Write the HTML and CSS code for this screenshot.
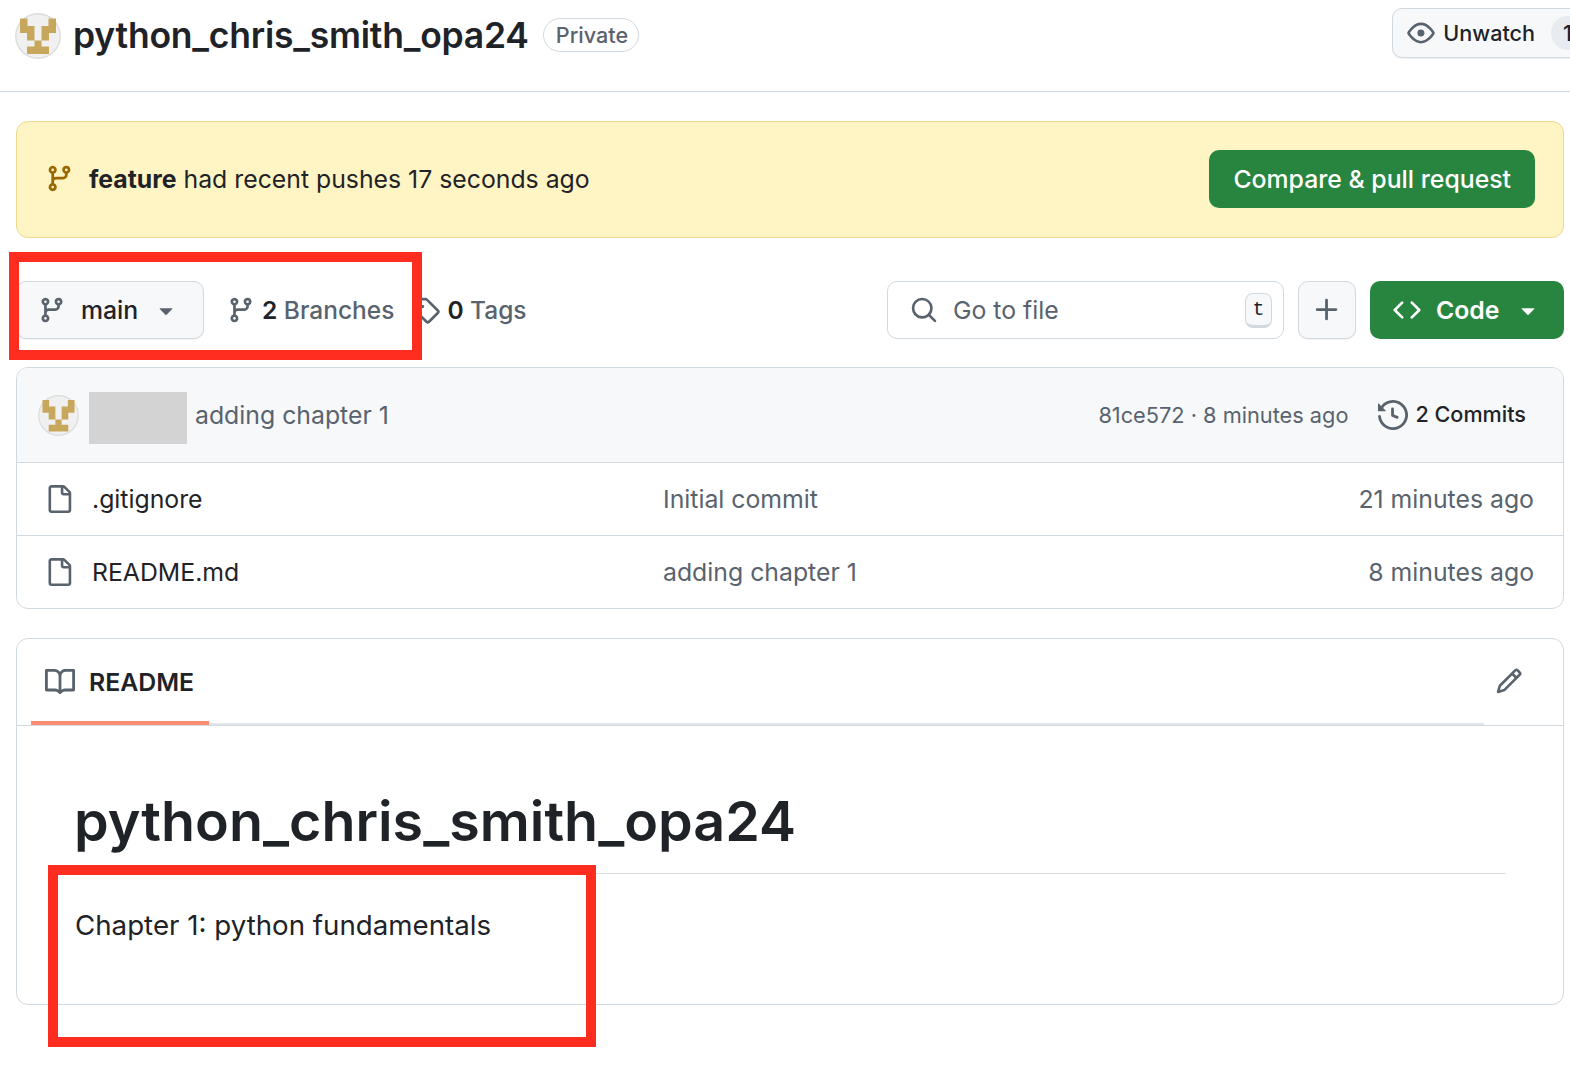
FILE: index.html
```html
<!DOCTYPE html>
<html lang="en">
<head>
    <meta charset="UTF-8">
    <meta name="viewport" content="width=device-width, initial-scale=1.0">
    <title>python_chris_smith_opa24</title>
    <link rel="stylesheet" href="styles.css">
</head>

<body>
    <svg class="icon-defs" aria-hidden="true">
        <symbol id="i-branch" viewBox="0 0 16 16"><path d="M9.5 3.25a2.25 2.25 0 1 1 3 2.122V6A2.5 2.5 0 0 1 10 8.5H6a1 1 0 0 0-1 1v1.128a2.251 2.251 0 1 1-1.5 0V5.372a2.25 2.25 0 1 1 1.5 0v1.836A2.493 2.493 0 0 1 6 7h4a1 1 0 0 0 1-1v-.628A2.25 2.25 0 0 1 9.5 3.25Zm-6 0a.75.75 0 1 0 1.5 0 .75.75 0 0 0-1.5 0Zm8.25-.75a.75.75 0 1 0 0 1.5.75.75 0 0 0 0-1.5ZM4.25 12a.75.75 0 1 0 0 1.5.75.75 0 0 0 0-1.5Z"/></symbol>
        <symbol id="i-eye" viewBox="0 0 16 16"><path d="M8 2c1.981 0 3.671.992 4.933 2.078 1.27 1.091 2.187 2.345 2.637 3.023a1.62 1.62 0 0 1 0 1.798c-.45.678-1.367 1.932-2.637 3.023C11.67 13.008 9.981 14 8 14c-1.981 0-3.671-.992-4.933-2.078C1.797 10.83.88 9.576.43 8.898a1.62 1.62 0 0 1 0-1.798c.45-.677 1.367-1.931 2.637-3.022C4.33 2.992 6.019 2 8 2ZM1.679 7.932a.12.12 0 0 0 0 .136c.411.622 1.241 1.75 2.366 2.717C5.176 11.758 6.527 12.5 8 12.5c1.473 0 2.825-.742 3.955-1.715 1.124-.967 1.954-2.096 2.366-2.717a.12.12 0 0 0 0-.136c-.412-.621-1.242-1.75-2.366-2.717C10.824 4.242 9.473 3.5 8 3.5c-1.473 0-2.825.742-3.955 1.715-1.124.967-1.954 2.096-2.366 2.717ZM8 10a2 2 0 1 1-.001-3.999A2 2 0 0 1 8 10Z"/></symbol>
        <symbol id="i-tag" viewBox="0 0 16 16"><path d="M1 7.775V2.75C1 1.784 1.784 1 2.75 1h5.025c.464 0 .91.184 1.238.513l6.25 6.25a1.75 1.75 0 0 1 0 2.474l-5.026 5.026a1.75 1.75 0 0 1-2.474 0l-6.25-6.25A1.752 1.752 0 0 1 1 7.775Zm1.5 0c0 .066.026.13.073.177l6.25 6.25a.25.25 0 0 0 .354 0l5.025-5.025a.25.25 0 0 0 0-.354l-6.25-6.25a.25.25 0 0 0-.177-.073H2.75a.25.25 0 0 0-.25.25ZM6 5a1 1 0 1 1 0 2 1 1 0 0 1 0-2Z"/></symbol>
        <symbol id="i-search" viewBox="0 0 16 16"><path d="M10.68 11.74a6 6 0 0 1-7.922-8.982 6 6 0 0 1 8.982 7.922l3.04 3.04a.749.749 0 0 1-.326 1.275.749.749 0 0 1-.734-.215ZM11.5 7a4.499 4.499 0 1 0-8.997 0A4.499 4.499 0 0 0 11.5 7Z"/></symbol>
        <symbol id="i-plus" viewBox="0 0 16 16"><path d="M7.75 2a.75.75 0 0 1 .75.75V7h4.25a.75.75 0 0 1 0 1.5H8.5v4.25a.75.75 0 0 1-1.5 0V8.5H2.75a.75.75 0 0 1 0-1.5H7V2.75A.75.75 0 0 1 7.75 2Z"/></symbol>
        <symbol id="i-code" viewBox="0 0 16 16"><path d="m11.28 3.22 4.25 4.25a.75.75 0 0 1 0 1.06l-4.25 4.25a.749.749 0 0 1-1.275-.326.749.749 0 0 1 .215-.734L13.94 8l-3.72-3.72a.749.749 0 0 1 .326-1.275.749.749 0 0 1 .734.215Zm-6.56 0a.751.751 0 0 1 1.042.018.751.751 0 0 1 .018 1.042L2.06 8l3.72 3.72a.749.749 0 0 1-.326 1.275.749.749 0 0 1-.734-.215L.47 8.53a.75.75 0 0 1 0-1.06Z"/></symbol>
        <symbol id="i-caret" viewBox="0 0 16 16"><path d="m4.427 7.427 3.396 3.396a.25.25 0 0 0 .354 0l3.396-3.396A.25.25 0 0 0 11.396 7H4.604a.25.25 0 0 0-.177.427Z"/></symbol>
        <symbol id="i-history" viewBox="0 0 16 16"><path d="m.427 1.927 1.215 1.215a8.002 8.002 0 1 1-1.6 5.685.75.75 0 1 1 1.493-.154 6.5 6.5 0 1 0 1.18-4.458l1.358 1.358A.25.25 0 0 1 3.896 6H.25A.25.25 0 0 1 0 5.75V2.104a.25.25 0 0 1 .427-.177ZM7.75 4a.75.75 0 0 1 .75.75v2.992l2.028.812a.75.75 0 0 1-.557 1.392l-2.5-1A.751.751 0 0 1 7 8.25v-3.5A.75.75 0 0 1 7.75 4Z"/></symbol>
        <symbol id="i-file" viewBox="0 0 16 16"><path d="M2 1.75C2 .784 2.784 0 3.75 0h6.586c.464 0 .909.184 1.237.513l2.914 2.914c.329.328.513.773.513 1.237v9.586A1.75 1.75 0 0 1 13.25 16h-9.5A1.75 1.75 0 0 1 2 14.25Zm1.75-.25a.25.25 0 0 0-.25.25v12.5c0 .138.112.25.25.25h9.5a.25.25 0 0 0 .25-.25V6h-2.75A1.75 1.75 0 0 1 9 4.25V1.5Zm6.75.062V4.25c0 .138.112.25.25.25h2.688l-.011-.013-2.914-2.914-.013-.011Z"/></symbol>
        <symbol id="i-book" viewBox="0 0 16 16"><path d="M0 1.75A.75.75 0 0 1 .75 1h4.253c1.227 0 2.317.59 3 1.501A3.743 3.743 0 0 1 11.006 1h4.245a.75.75 0 0 1 .75.75v10.5a.75.75 0 0 1-.75.75h-4.507a2.25 2.25 0 0 0-1.591.659l-.622.621a.75.75 0 0 1-1.06 0l-.622-.621A2.25 2.25 0 0 0 5.258 13H.75a.75.75 0 0 1-.75-.75Zm7.251 10.324.004-5.073-.002-2.253A2.25 2.25 0 0 0 5.003 2.5H1.5v9h3.757a3.75 3.75 0 0 1 1.994.574ZM8.755 4.75l-.004 7.322a3.752 3.752 0 0 1 1.992-.572H14.5v-9h-3.495a2.25 2.25 0 0 0-2.25 2.25Z"/></symbol>
        <symbol id="i-pencil" viewBox="0 0 16 16"><path d="M11.013 1.427a1.75 1.75 0 0 1 2.474 0l1.086 1.086a1.75 1.75 0 0 1 0 2.474l-8.61 8.61c-.21.21-.47.364-.756.445l-3.251.93a.75.75 0 0 1-.927-.928l.929-3.25c.081-.286.235-.547.445-.758l8.61-8.61Zm.176 4.823L9.75 4.81l-6.286 6.287a.253.253 0 0 0-.064.108l-.558 1.953 1.953-.558a.253.253 0 0 0 .108-.064Zm1.238-3.763a.25.25 0 0 0-.354 0L10.811 3.75l1.439 1.44 1.263-1.263a.25.25 0 0 0 0-.354Z"/></symbol>
        <symbol id="i-avatar" viewBox="0 0 46 46">
            <circle cx="23" cy="23" r="22.2" fill="#f0f0f0" stroke="#dcdcdc" stroke-width="1.4"/>
            <path fill="#c7a75c" d="M5 5.5h7.500V13h7v14.500h7V13h7V5.500H41V20h-7v7.500h-7.500v6H34V41H12v-7.500h7.500v-6H12V20H5Z"/>
        </symbol>
    </svg>

    <header class="repo-head">
        <svg class="avatar-lg"><use href="#i-avatar"/></svg>
        <span class="repo-name">python_chris_smith_opa24</span>
        <span class="label-private">Private</span>
        <div class="btn btn-watch">
            <svg class="ico ico-eye"><use href="#i-eye"/></svg>
            <span>Unwatch</span>
            <span class="counter">1</span>
        </div>
    </header>

    <main class="content">
        <div class="push-banner">
            <svg class="ico ico-push"><use href="#i-branch"/></svg>
            <p class="push-text"><strong>feature</strong> had recent pushes 17 seconds ago</p>
            <div class="btn-green btn-compare">Compare &amp; pull request</div>
        </div>

        <div class="toolbar">
            <div class="btn btn-branch">
                <svg class="ico"><use href="#i-branch"/></svg>
                <span class="branch-name">main</span>
                <svg class="ico ico-caret"><use href="#i-caret"/></svg>
            </div>
            <div class="ref-link ref-branches">
                <svg class="ico"><use href="#i-branch"/></svg>
                <span><b>2</b> Branches</span>
            </div>
            <div class="ref-link ref-tags">
                <svg class="ico"><use href="#i-tag"/></svg>
                <span><b>0</b> Tags</span>
            </div>
            <div class="file-search">
                <svg class="ico"><use href="#i-search"/></svg>
                <span class="search-text">Go to file</span>
                <kbd class="key">t</kbd>
            </div>
            <div class="btn btn-plus"><svg class="ico ico-plus"><use href="#i-plus"/></svg></div>
            <div class="btn-green btn-code">
                <svg class="ico"><use href="#i-code"/></svg>
                <span>Code</span>
                <svg class="ico ico-caret"><use href="#i-caret"/></svg>
            </div>
        </div>

        <section class="files">
            <div class="commit-bar">
                <svg class="avatar-sm"><use href="#i-avatar"/></svg>
                <div class="redacted"></div>
                <span class="commit-msg">adding chapter 1</span>
                <span class="commit-meta">81ce572 · 8 minutes ago</span>
                <svg class="ico ico-history"><use href="#i-history"/></svg>
                <span class="commit-count">2 Commits</span>
            </div>
            <div class="file-row">
                <svg class="ico ico-file"><use href="#i-file"/></svg>
                <span class="file-name">.gitignore</span>
                <span class="file-msg">Initial commit</span>
                <span class="file-time">21 minutes ago</span>
            </div>
            <div class="file-row">
                <svg class="ico ico-file"><use href="#i-file"/></svg>
                <span class="file-name">README.md</span>
                <span class="file-msg">adding chapter 1</span>
                <span class="file-time">8 minutes ago</span>
            </div>
        </section>

        <section class="readme">
            <div class="readme-tabs">
                <div class="readme-rail">
                    <div class="readme-tab">
                        <svg class="ico ico-book"><use href="#i-book"/></svg>
                        <span>README</span>
                    </div>
                </div>
                <svg class="ico ico-pencil"><use href="#i-pencil"/></svg>
            </div>
            <div class="readme-body">
                <h1>python_chris_smith_opa24</h1>
                <p>Chapter 1: python fundamentals</p>
            </div>
        </section>
    </main>

    <div class="red-box red-box-refs"></div>
    <div class="red-box red-box-chapter"></div>
</body>
</html>
```

FILE: styles.css
```css
* {
    box-sizing: border-box;
}

body {
    position: relative;
    margin: 0;
    height: 1076px;
    overflow: hidden;
    background: #fff;
    color: #1f2328;
    font-family: Inter, "Liberation Sans", sans-serif;
    font-size: 24.8px;
}

.icon-defs {
    display: none;
}

.ico {
    width: 28px;
    height: 28px;
    flex: none;
    fill: #59636e;
}

/* repo header */
.repo-head {
    display: flex;
    align-items: center;
    height: 92px;
    padding: 0 0 20px 15px;
    border-bottom: 1px solid #d1d9e0;
    overflow: hidden;
}

.avatar-lg {
    width: 46px;
    height: 46px;
    flex: none;
}

.repo-name {
    margin-left: 12px;
    font-size: 35.5px;
    font-weight: 600;
    letter-spacing: -0.22px;
}

.label-private {
    margin-left: 14px;
    margin-bottom: 2px;
    padding: 0 10px 0 12px;
    height: 34px;
    line-height: 32px;
    border: 1px solid #d1d9e0;
    border-radius: 17px;
    color: #59636e;
    font-size: 21.6px;
    font-weight: 500;
}

.btn {
    display: flex;
    align-items: center;
    background: #f6f8fa;
    border: 1px solid #d1d9e0;
    border-radius: 10px;
    box-shadow: 0 1px 1px rgba(31, 35, 40, 0.06);
}

.btn-watch {
    flex: none;
    margin-left: auto;
    margin-right: -33px;
    margin-bottom: 5px;
    height: 50px;
    padding: 0 14px;
    font-weight: 500;
    font-size: 21.6px;
}

.ico-eye {
    margin-right: 8px;
}

.counter {
    margin-left: 16px;
    padding: 0 16px 0 12px;
    height: 34px;
    line-height: 34px;
    border-radius: 17px;
    background: #e8ebef;
}

/* push banner */
.content {
    padding: 29px 6px 0 16px;
}

.push-banner {
    display: flex;
    align-items: center;
    height: 117px;
    padding: 0 28px 2px 28px;
    background: #fff5c4;
    border: 1px solid #ecd98f;
    border-radius: 12px;
}

.ico-push {
    width: 29px;
    height: 29px;
    fill: #9a6700;
}

.push-text {
    margin: 0 0 0 15px;
}

.btn-green {
    display: flex;
    align-items: center;
    background: #288540;
    color: #fff;
    font-weight: 500;
    border-radius: 10px;
}

.btn-compare {
    margin-left: auto;
    height: 58px;
    padding: 0 24px;
}

/* toolbar */
.toolbar {
    display: flex;
    align-items: center;
    height: 58px;
    margin-top: 43px;
}

.btn-branch {
    height: 58px;
    width: 188px;
    padding-left: 21px;
}

.branch-name {
    margin-left: 15px;
    font-weight: 500;
}

.btn-branch .ico-caret {
    margin-left: 14px;
}

.ref-link {
    display: flex;
    align-items: center;
    gap: 7px;
    color: #59636e;
    font-size: 24.5px;
    font-weight: 500;
}

.ref-link b {
    color: #1f2328;
    font-weight: 600;
}

.ref-branches {
    margin-left: 23px;
}

.ref-tags {
    margin-left: 18px;
}

.file-search {
    display: flex;
    align-items: center;
    width: 397px;
    height: 58px;
    margin-left: auto;
    padding: 0 11px 0 22px;
    border: 1px solid #d1d9e0;
    border-radius: 10px;
}

.search-text {
    margin-left: 15px;
    color: #59636e;
}

.key {
    margin-left: auto;
    width: 27px;
    height: 35px;
    line-height: 31px;
    text-align: center;
    background: #f6f8fa;
    border: 1px solid #d1d9e0;
    border-bottom-width: 3px;
    border-radius: 8px;
    font-family: "Liberation Mono", monospace;
    font-size: 20px;
}

.btn-plus {
    justify-content: center;
    width: 58px;
    height: 58px;
    margin-left: 14px;
}

.ico-plus {
    width: 30px;
    height: 30px;
}

.btn-code {
    width: 194px;
    height: 58px;
    margin-left: 14px;
    padding-left: 23px;
    font-weight: 600;
}

.btn-code .ico {
    fill: #fff;
}

.btn-code span {
    margin-left: 15px;
}

.btn-code .ico-caret {
    margin-left: 14px;
}

/* file list */
.files {
    margin-top: 28px;
    border: 1px solid #d1d9e0;
    border-radius: 12px;
    overflow: hidden;
}

.commit-bar {
    display: flex;
    align-items: center;
    height: 94px;
    padding: 0 37px 0 21px;
    background: #f6f8fa;
}

.avatar-sm {
    width: 41px;
    height: 41px;
    flex: none;
}

.redacted {
    width: 98px;
    height: 52px;
    margin-top: 6px;
    margin-left: 10px;
    background: #d3d3d3;
}

.commit-msg {
    margin-left: 8px;
    color: #59636e;
}

.commit-meta {
    margin-left: auto;
    color: #59636e;
    font-size: 21.75px;
}

.ico-history {
    margin-left: 30px;
    width: 30px;
    height: 30px;
}

.commit-count {
    margin-left: 7px;
    margin-bottom: 2px;
    font-size: 21.6px;
    font-weight: 500;
}

.file-row {
    display: flex;
    align-items: center;
    height: 73px;
    padding: 0 29px 0 28px;
    border-top: 1px solid #d1d9e0;
}

.file-name {
    width: 571px;
    margin-left: 19px;
}

.file-msg {
    color: #59636e;
}

.file-time {
    margin-left: auto;
    color: #59636e;
}

/* readme */
.readme {
    height: 367px;
    margin-top: 29px;
    border: 1px solid #d1d9e0;
    border-radius: 12px;
    overflow: hidden;
}

.readme-tabs {
    display: flex;
    align-items: center;
    justify-content: space-between;
    height: 87px;
    padding-right: 40px;
    padding-left: 14px;
    border-bottom: 1px solid #d1d9e0;
}

.readme-rail {
    width: 1453px;
    height: 86px;
    border-bottom: 2px solid #e2e6e9;
}

.readme-tab {
    display: flex;
    align-items: center;
    gap: 14px;
    width: 178px;
    height: 86px;
    padding-top: 4px;
    padding-left: 14px;
    border-bottom: 4px solid #fd8c73;
    font-weight: 600;
}

.ico-book {
    width: 30px;
    height: 30px;
}

.ico-pencil {
    width: 28px;
    height: 28px;
    margin-bottom: 2px;
}

.readme-body {
    padding: 0 57px 0 58px;
}

.readme-body h1 {
    margin: 61px 0 0 -1px;
    padding-bottom: 18px;
    border-bottom: 1px solid #d8dee4;
    font-size: 55.6px;
    line-height: 68px;
    font-weight: 600;
}

.readme-body p {
    margin: 34px 0 0;
    font-size: 27.7px;
}

/* annotation boxes drawn over the screenshot */
.red-box {
    position: absolute;
    border: 10px solid #ff2d20;
}

.red-box-refs {
    left: 9px;
    top: 252px;
    width: 413px;
    height: 108px;
}

.red-box-chapter {
    left: 48px;
    top: 865px;
    width: 548px;
    height: 182px;
}
```
